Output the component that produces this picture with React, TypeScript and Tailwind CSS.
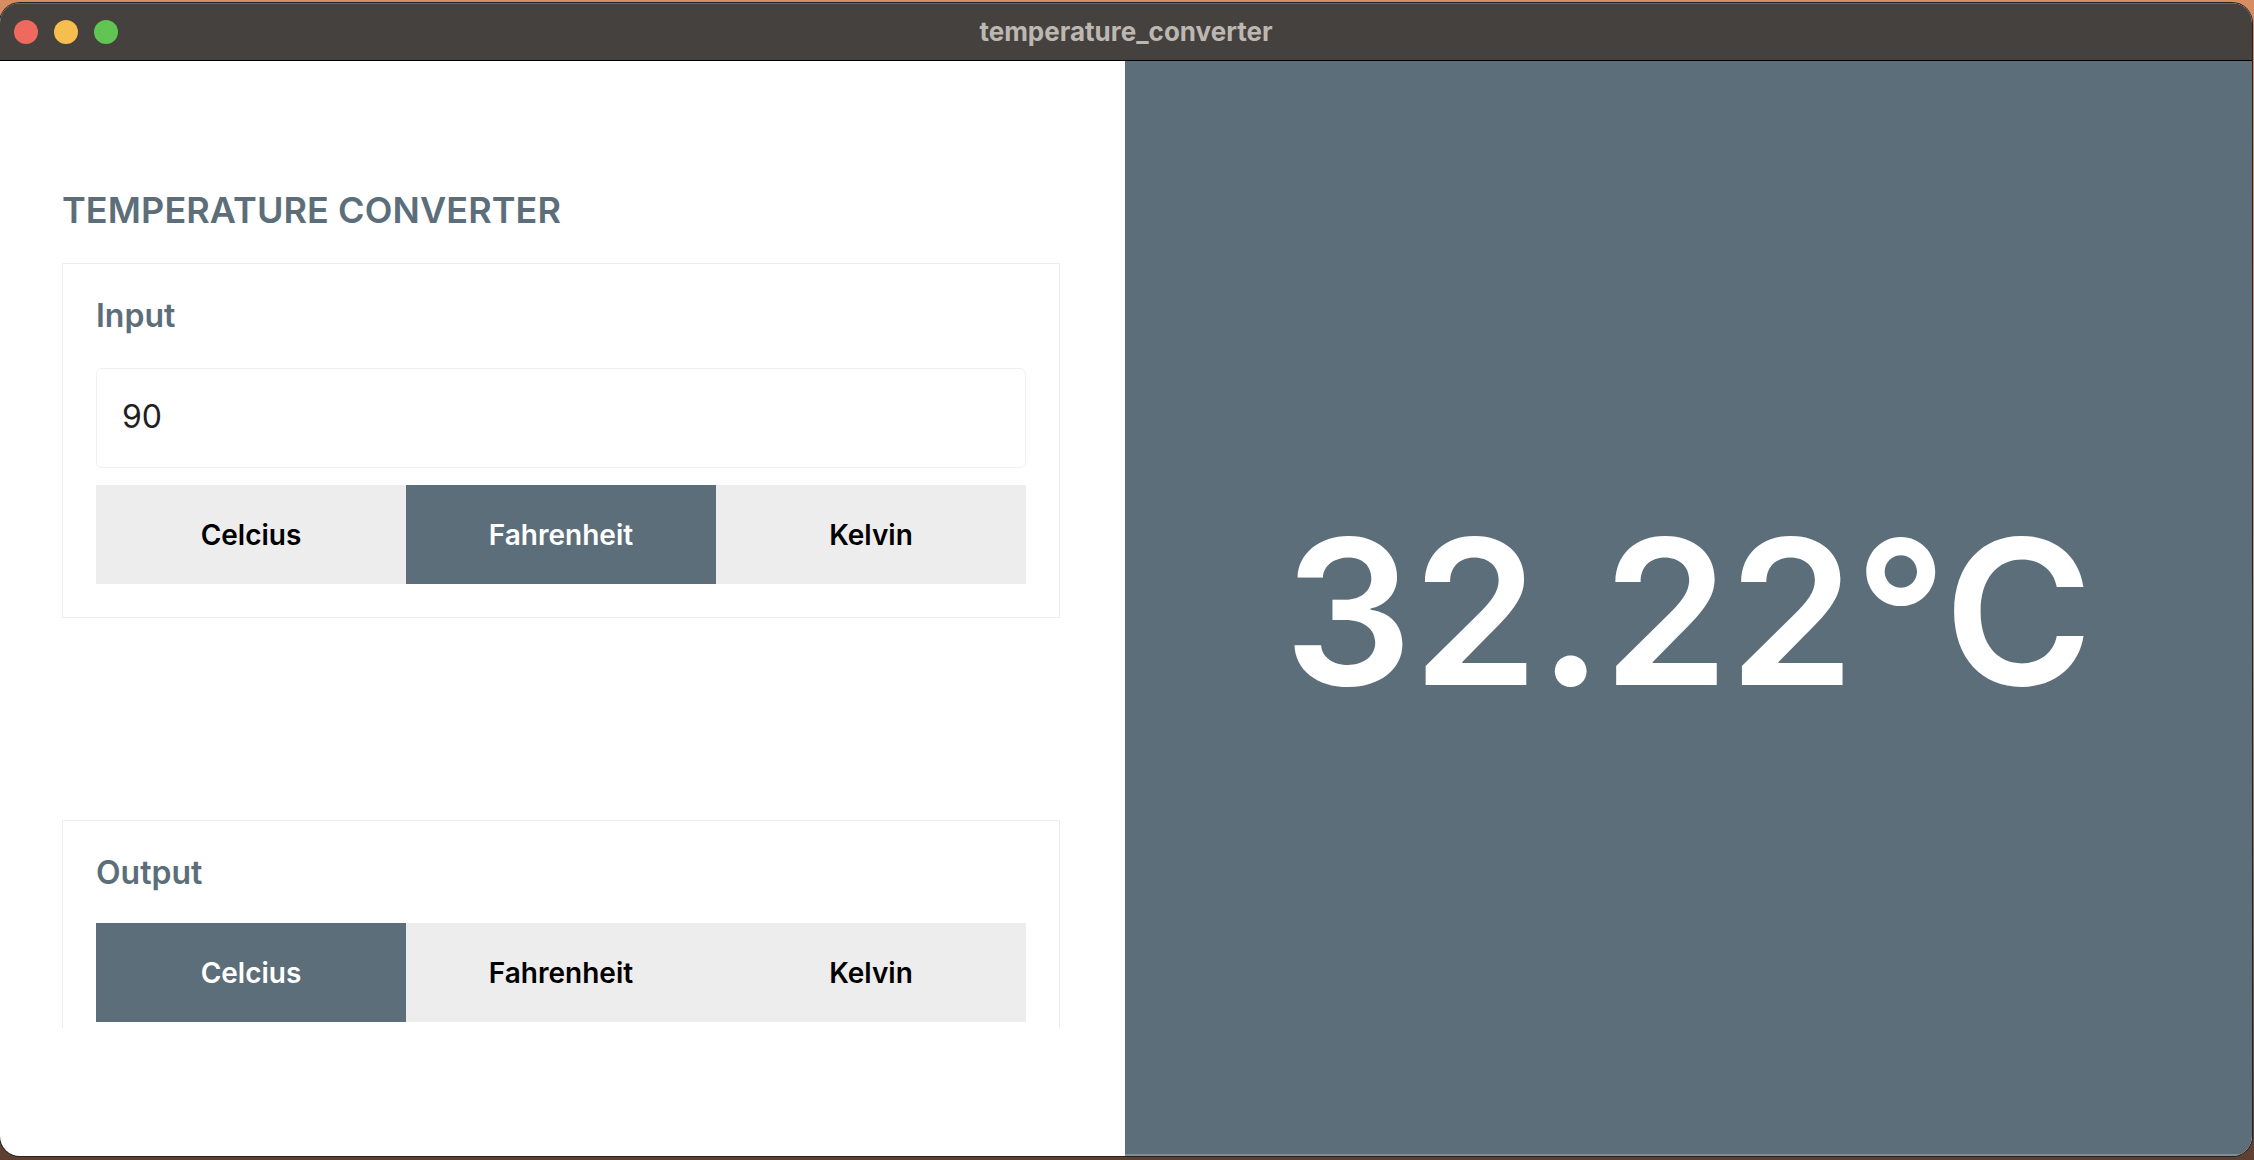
import React, { useState } from 'react';

type Unit = 'C' | 'F' | 'K';

const units: { id: Unit; label: string }[] = [
  { id: 'C', label: 'Celcius' },
  { id: 'F', label: 'Fahrenheit' },
  { id: 'K', label: 'Kelvin' },
];

const toCelsius = (v: number, u: Unit) => (u === 'C' ? v : u === 'F' ? ((v - 32) * 5) / 9 : v - 273.15);
const fromCelsius = (c: number, u: Unit) => (u === 'C' ? c : u === 'F' ? (c * 9) / 5 + 32 : c + 273.15);

const UnitPicker: React.FC<{ value: Unit; onChange: (u: Unit) => void }> = ({ value, onChange }) => (
  <div className="grid grid-cols-3 shrink-0">
    {units.map((u) => (
      <button
        key={u.id}
        onClick={() => onChange(u.id)}
        className={
          value === u.id
            ? 'h-[99px] bg-[#5b6e7a] text-white text-[28px] font-semibold'
            : 'h-[99px] bg-[#ededed] text-black text-[28px] font-semibold'
        }
      >
        {u.label}
      </button>
    ))}
  </div>
);

export default function App() {
  const [input, setInput] = useState('90');
  const [from, setFrom] = useState<Unit>('F');
  const [to, setTo] = useState<Unit>('C');

  const num = parseFloat(input);
  const result = isNaN(num) ? '--' : fromCelsius(toCelsius(num, from), to).toFixed(2);
  const suffix = to === 'K' ? 'K' : `°${to}`;

  return (
    <div className="w-[2254px] h-[1160px] pt-[3px] pr-[2px] pb-[4px] bg-gradient-to-b from-[#d98c62] via-[#c99a82] to-[#5e3f30] font-['Inter',sans-serif]">
      {/* window */}
      <div className="h-full flex flex-col rounded-[20px] overflow-hidden bg-white shadow-[0_0_0_1px_#222]">
        {/* title bar */}
        <div className="h-[58px] shrink-0 grid grid-cols-[1fr_auto_1fr] items-center bg-[#45413e] border-t border-[#6c6865] border-b border-b-black">
          <div className="flex items-center gap-[16px] pl-[14px]">
            <span className="w-[24px] h-[24px] rounded-full bg-[#ee6a5f]" />
            <span className="w-[24px] h-[24px] rounded-full bg-[#f5be4f]" />
            <span className="w-[24px] h-[24px] rounded-full bg-[#61c554]" />
          </div>
          <div className="text-[26px] font-bold text-[#bdb7b2] leading-none">temperature_converter</div>
          <div />
        </div>

        <div className="flex-1 flex min-h-0">
          {/* left column */}
          <div className="w-[1125px] shrink-0 flex flex-col pl-[62px] pr-[65px] pt-[127px] pb-[128px]">
            <div className="flex-1 min-h-0 overflow-hidden flex flex-col">
              <h1 className="text-[36px] leading-[44px] font-semibold text-[#5b6e7a] tracking-[0.1px] shrink-0">TEMPERATURE CONVERTER</h1>

              <div className="mt-[31px] shrink-0 border border-[#ededed] px-[33px] pt-[32px] pb-[33px] flex flex-col">
                <div className="text-[32px] leading-[39px] font-semibold text-[#5b6e7a] mb-[33px]">Input</div>
                <input
                  value={input}
                  onChange={(e) => setInput(e.target.value)}
                  className="h-[100px] border border-[#f0f0f0] rounded-[6px] pl-[25px] pb-[4px] text-[32px] text-[#1f1f1f] outline-none mb-[17px]"
                />
                <UnitPicker value={from} onChange={setFrom} />
              </div>

              <div className="mt-[202px] shrink-0 border border-[#ededed] px-[33px] pt-[32px] pb-[33px] flex flex-col">
                <div className="text-[32px] leading-[39px] font-semibold text-[#5b6e7a] mb-[31px]">Output</div>
                <UnitPicker value={to} onChange={setTo} />
              </div>
            </div>
          </div>

          {/* result panel */}
          <div className="flex-1 bg-[#5b6e7a] flex items-center justify-center border-b-2 border-[#7e8d96]">
            <div className="mt-[9px] text-[202px] leading-none font-semibold text-white">
              {result}
              {suffix}
            </div>
          </div>
        </div>
      </div>
    </div>
  );
}
